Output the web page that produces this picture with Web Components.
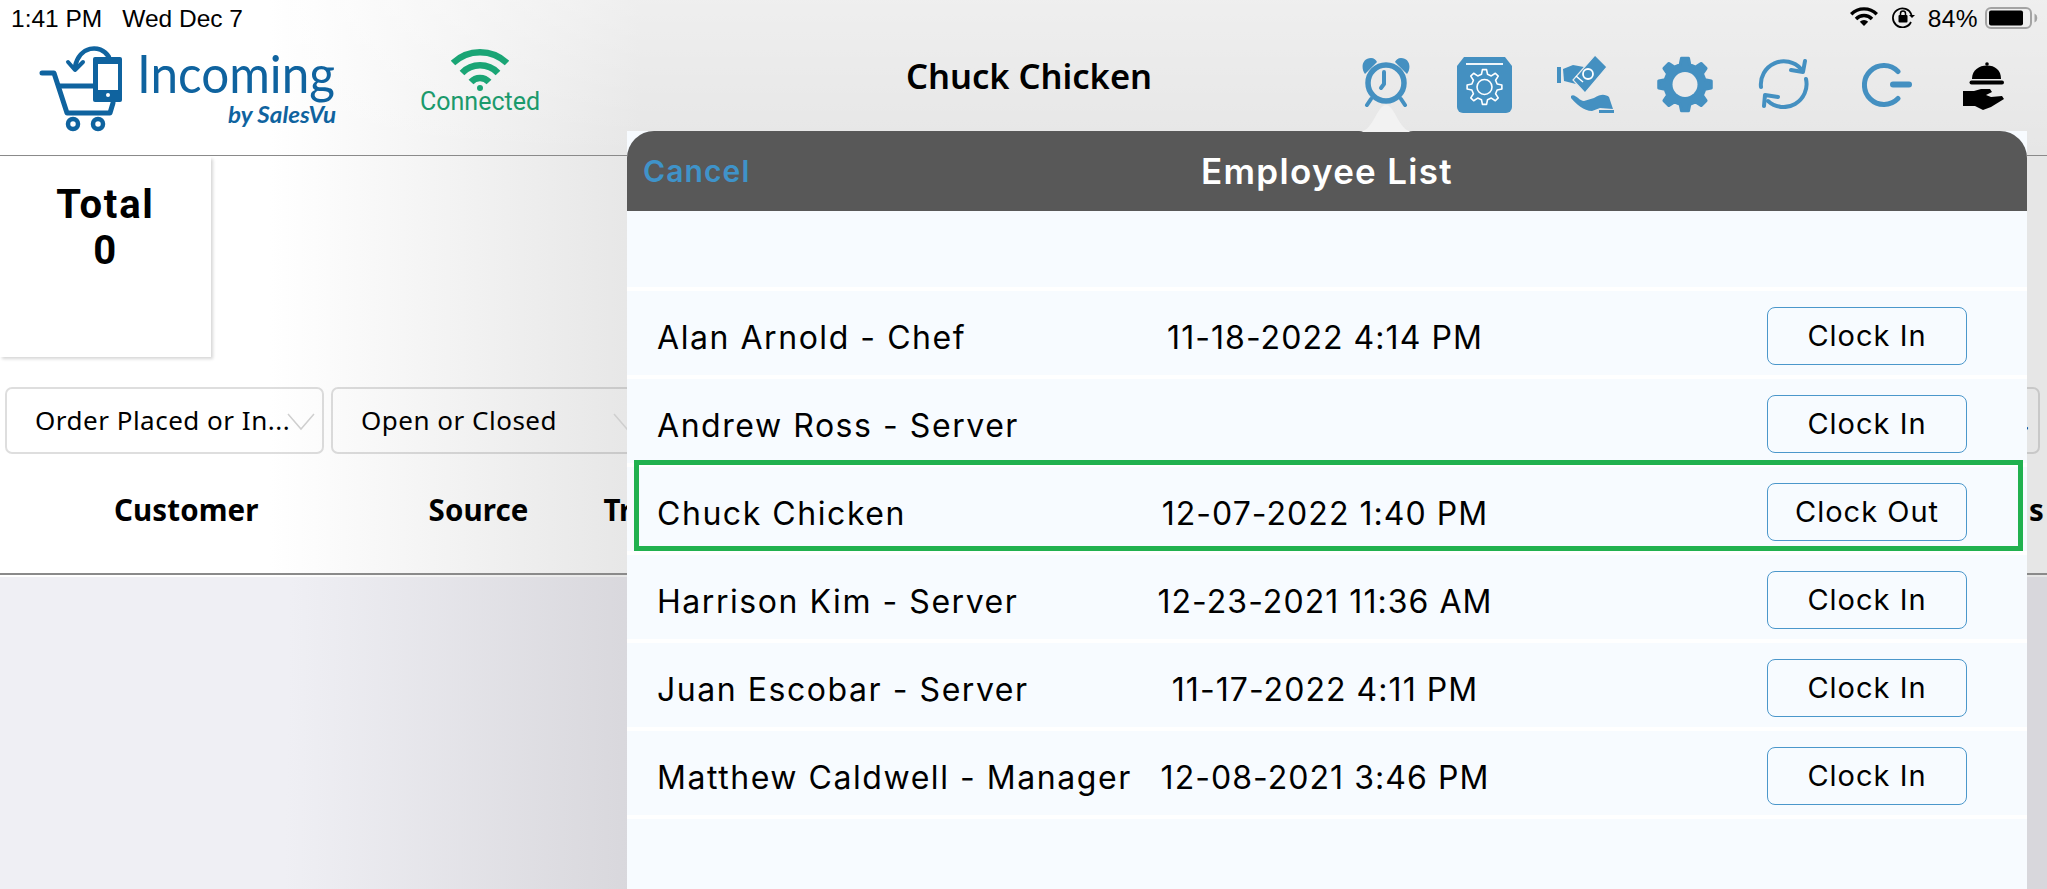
<!DOCTYPE html>
<html lang="en"><head><meta charset="utf-8"><title>Incoming</title>
<style>html,body{margin:0;height:100%;overflow:hidden}body{font-family:"Noto Sans",sans-serif}</style>
</head><body>
<pos-app></pos-app>
<script>
function gearPath(cx,cy,R,r,n,a0,b0){let d='';const s=2*Math.PI/n;for(let i=0;i<n;i++){const a=-Math.PI/2+i*s;
 [[r,-a0],[R,-b0],[R,b0],[r,a0]].forEach(([q,o],j)=>{const t=a+o*s;d+=(i===0&&j===0?'M':'L')+(cx+q*Math.cos(t)).toFixed(2)+' '+(cy+q*Math.sin(t)).toFixed(2)});}
 return d+'Z';}
function def(name,html,setup){customElements.define(name,class extends HTMLElement{connectedCallback(){if(this.shadowRoot)return;const r=this.attachShadow({mode:'open'});r.innerHTML=typeof html==='function'?html(this):html;if(setup)setup(r,this);}});}
const BLUE='#4490c1';
def('status-bar',`<style>
:host{display:flex;height:37px;align-items:flex-start;font:24.5px "Liberation Sans",sans-serif;color:#000;position:relative}
.t{margin-top:5px;line-height:27px}
svg{display:block;flex:none}
</style>
<span class="t" style="margin-left:11px">1:41 PM</span><span class="t" style="margin-left:20px">Wed Dec 7</span>
<svg style="margin:7px 0 0 auto" width="28" height="19" viewBox="0 0 28 19" fill="none" stroke="#000" stroke-width="3.4"><path d="M1.2 7.2A18 18 0 0 1 26.8 7.2"/><path d="M6 12A11 11 0 0 1 22 12"/><path d="M14 19L9.8 14.8A6 6 0 0 1 18.2 14.8Z" fill="#000" stroke="none"/></svg>
<svg style="margin:6px 0 0 14px" width="24" height="22" viewBox="0 0 24 22" fill="none" stroke="#000" stroke-width="1.8"><path d="M19 16A9.5 9.5 0 1 1 19.5 9"/><path d="M17 9L20 12L23 9" fill="#000" stroke="none"/><rect x="6.5" y="9" width="9" height="7.5" rx="1" fill="#000" stroke="none"/><path d="M8.5 9V7.5A2.5 2.5 0 0 1 13.5 7.5V9" stroke-width="1.5"/></svg>
<span class="t" style="margin-left:12px;letter-spacing:.4px">84%</span>
<svg style="margin:7px 9px 0 7px" width="53" height="22" viewBox="0 0 53 22"><rect x="1" y="1" width="45" height="20" rx="5" fill="none" stroke="#a3a3a3" stroke-width="2"/><rect x="4" y="3.500" width="34" height="15" rx="2" fill="#000"/><path d="M49.500 6.500a5 5 0 0 1 0 9z" fill="#a3a3a3"/></svg>`);
def('brand-logo',`<style>:host{display:block;width:320px;height:100px;flex:none}svg{display:block}</style>
<svg width="320" height="100" viewBox="0 0 320 100" fill="none" stroke="#0f639f" stroke-linecap="round" stroke-linejoin="round">
<path d="M12 33H24L37 73H80L83 63" stroke-width="5"/><path d="M29 46H64" stroke-width="5"/>
<circle cx="43" cy="84" r="5" stroke-width="4.500"/><circle cx="68" cy="84" r="5" stroke-width="4.500"/>
<path d="M79 17C70 3 49 6 45 27" stroke-width="4.500"/><path d="M38 22L45 30L53 22" stroke-width="4"/>
<rect x="63" y="17" width="29" height="45" rx="2" fill="#0f639f" stroke="none"/><rect x="68" y="24" width="20" height="26" fill="#fff" stroke="none"/><circle cx="78" cy="55" r="2" fill="#fff" stroke="none"/>
<text x="107" y="53" font-family="Lato,sans-serif" font-weight="400" font-size="52" fill="#0f639f" stroke="none" textLength="198" lengthAdjust="spacingAndGlyphs">Incoming</text>
<text x="198" y="83" font-family="Lato,sans-serif" font-weight="700" font-style="italic" font-size="23" fill="#0f639f" stroke="none" textLength="108" lengthAdjust="spacingAndGlyphs">by SalesVu</text>
</svg>`);
def('link-status',`<style>:host{display:flex;flex-direction:column;align-items:center;width:120px;flex:none;color:#1b9a6c;font:25px/28px Roboto,sans-serif}svg{display:block;margin-bottom:-3px}</style>
<svg width="58" height="43" viewBox="0 0 58 43" fill="none" stroke="#1aa575" stroke-width="6.500"><path d="M2 15A39 39 0 0 1 56 15"/><path d="M11 25A25 25 0 0 1 47 25"/><path d="M20 34A12 12 0 0 1 38 34"/><circle cx="29" cy="40" r="3" fill="#1aa575" stroke="none"/></svg>
<span>Connected</span>`);
def('clock-icon',`<style>:host{display:block}svg{display:block}</style><svg width="48" height="49" viewBox="0 0 48 49" fill="none" stroke="${BLUE}"><circle cx="24" cy="25" r="18" stroke-width="5.500"/><path d="M3 16C-2 9 1 0 9 0C12 0 14 2 15 4ZM45 16C50 9 47 0 39 0C36 0 34 2 33 4Z" fill="${BLUE}" stroke="none"/><path d="M9 41L5 47M39 41L43 47" stroke-width="4" stroke-linecap="round"/><path d="M22 14V26L19 30" stroke-width="4" stroke-linecap="round" stroke-linejoin="round"/></svg>`);
def('config-icon',`<style>:host{display:block}svg{display:block}</style><svg width="55" height="56" viewBox="0 0 55 56"><path d="M7 0H48L55 9V50A6 6 0 0 1 49 56H6A6 6 0 0 1 0 50V9Z" fill="${BLUE}"/><path d="M9 7H46" stroke="#f0f6fa" stroke-width="2"/><path d="${gearPath(27.5,30,17.500,13,8,.3,.15)}" fill="none" stroke="#fff" stroke-width="1.600" stroke-linejoin="round"/><circle cx="27.500" cy="30" r="7.500" fill="none" stroke="#fff" stroke-width="1.600"/></svg>`);
def('cash-icon',`<style>:host{display:block}svg{display:block}</style><svg width="58" height="58" viewBox="0 0 58 58"><path d="M1 12H5V28H1Z" fill="${BLUE}"/><path d="M7 14L17 10L28 12L30 30H24L8 26Z" fill="${BLUE}"/><path d="M39 0L51 12L29 38L17 25Z" fill="${BLUE}" stroke="#eaeaea" stroke-width="1.200"/><circle cx="32" cy="19" r="5" fill="none" stroke="#fff" stroke-width="1.800"/><path d="M20 21L27 27" stroke="#fff" stroke-width="1.500"/><path d="M15 41C19 38 23 46 28 46L38 43C46 38 50 40 53 42L57 54L44 53L36 56C28 56 20 49 15 43Z" fill="${BLUE}"/><path d="M43 55H58V58H43Z" fill="${BLUE}"/></svg>`);
def('gear-icon',`<style>:host{display:block}svg{display:block}</style><svg width="58" height="57" viewBox="0 0 58 57"><path d="${gearPath(29,28.5,26.500,20.500,8,.3,.17)} M29 15.500A13 13 0 1 0 29 41.500A13 13 0 1 0 29 15.500Z" fill="${BLUE}" stroke="${BLUE}" stroke-width="3" stroke-linejoin="round" fill-rule="evenodd"/><circle cx="29" cy="28.500" r="12.500" fill="#ebebeb"/></svg>`);
def('sync-icon',`<style>:host{display:block}svg{display:block}</style><svg width="52" height="50" viewBox="0 0 52 50" fill="none" stroke="${BLUE}" stroke-width="4" stroke-linecap="round" stroke-linejoin="round"><path d="M3 28A23 23 0 0 1 43 10"/><path d="M47 2L45 13L33 11"/><path d="M48 20A23 23 0 0 1 10 42"/><path d="M6 47L7 36L20 38"/></svg>`);
def('power-icon',`<style>:host{display:block}svg{display:block}</style><svg width="51" height="44" viewBox="0 0 51 44" fill="none" stroke="${BLUE}" stroke-linecap="round"><path d="M36 8.500A19.500 19.500 0 1 0 36 35.500" stroke-width="5"/><path d="M31 21.500H47" stroke-width="6"/></svg>`);
def('service-icon',`<style>:host{display:block}svg{display:block}</style><svg width="41" height="48" viewBox="0 0 41 48" fill="#000"><circle cx="24" cy="2" r="1.800"/><path d="M9 17C9 8 16 3.500 24 3.500S38 8 38 17Z"/><rect x="6.500" y="18.500" width="34.500" height="4" rx="2"/><path d="M0 29H11L18 27H27L29 30L23 33L28 35L39 34L41 37L28 45L20 48L12 44H0Z"/></svg>`);
def('app-header',`<style>
:host{display:flex;height:118px;border-bottom:1px solid #8a8a8a;align-items:flex-start;box-sizing:content-box}
brand-logo{margin:3px 0 0 30px}
link-status{margin:11px 0 0 70px}
.title{flex:none;width:248px;margin:19px 0 0 365px;font:600 34.5px/40px "Noto Sans",sans-serif;color:#000;white-space:nowrap;display:flex;justify-content:center}
</style>
<brand-logo></brand-logo><link-status></link-status><div class="title">Chuck Chicken</div>
<clock-icon style="margin:21px 0 0 209px"></clock-icon>
<config-icon style="margin:20px 0 0 47px"></config-icon>
<cash-icon style="margin:18px 0 0 44px"></cash-icon>
<gear-icon style="margin:19px 0 0 42px"></gear-icon>
<sync-icon style="margin:22px 0 0 44px"></sync-icon>
<power-icon style="margin:26px 0 0 52px"></power-icon>
<service-icon style="margin:25px 0 0 50px"></service-icon>`);
def('stat-card',t=>`<style>:host{display:block;box-sizing:border-box;width:211px;height:200px;margin-top:1px;background:#fff;box-shadow:2px 2px 3px rgba(0,0,0,.16);padding-top:25px;text-align:center;font:700 40px/46px Roboto,sans-serif;letter-spacing:1.8px;color:#000}div{margin:0}</style><div>${t.getAttribute('label')}</div><div>${t.getAttribute('value')}</div>`);
def('filter-select',`<style>:host{display:block;box-sizing:border-box;position:relative;width:319px;height:67px;flex:none;border:2px solid rgba(0,0,0,.13);border-radius:7px;font:26px/62px "Noto Sans",sans-serif;letter-spacing:.5px;color:#000;padding-left:28px;white-space:nowrap}
svg{position:absolute;left:280px;top:24px}:host([end]){flex:1 1 auto;padding-right:8px;text-align:right}:host([end]) svg{display:none}</style><slot></slot><svg width="28" height="18" viewBox="0 0 28 18" fill="none" stroke="#cfcfcf" stroke-width="1.500"><path d="M1 1L14 16L27 1"/></svg>`);
def('filter-bar',`<style>:host{display:flex;gap:7px;margin-top:30px;padding:0 7px 0 5px}</style><slot></slot>`);
def('table-head',`<style>:host{display:flex;box-sizing:border-box;height:121px;border-bottom:2px solid #8a8a8a;padding-bottom:8px;align-items:center;font:700 29.5px "Noto Sans",sans-serif;letter-spacing:.1px;color:#000}span{white-space:nowrap}</style>
<span style="margin-left:114px">Customer</span><span style="margin-left:170px">Source</span><span style="margin-left:75px">Tr</span><span style="margin-left:auto;margin-right:3px">s</span>`);
def('clock-button',`<style>:host{display:flex;box-sizing:border-box;width:200px;height:58px;border:1.500px solid #4b97cb;border-radius:8px;align-items:center;justify-content:center;padding-bottom:2px;font:400 29px Inter,sans-serif;letter-spacing:1px;color:#000}</style><slot></slot>`);
def('employee-row',t=>`<style>:host{display:grid;position:relative;box-sizing:border-box;height:88px;border-bottom:4px solid #fff;padding:6px 60px 0 30px;grid-template-columns:480px 376px 1fr 200px;align-items:center;font:400 32px Inter,sans-serif;letter-spacing:1.35px;color:#000}
.d{text-align:center;white-space:nowrap;margin-top:2px;letter-spacing:1.05px}.n{white-space:nowrap;margin-top:2px;letter-spacing:1.55px}clock-button{grid-column:4}
.hl{position:absolute;left:7px;right:4px;top:-7px;box-sizing:border-box;height:91px;border:5px solid #21b14f;pointer-events:none}</style>
<div class="n">${t.getAttribute('name')}</div><div class="d">${t.getAttribute('time')||''}</div><clock-button>${t.getAttribute('action')||'Clock In'}</clock-button>${t.hasAttribute('current')?'<div class="hl"></div>':''}`);
def('employee-popover',`<style>:host{display:flex;flex-direction:column;position:absolute;left:627px;top:131px;width:1400px;bottom:0;background:#f7fbff}
.arrow{position:absolute;left:732px;top:-26px;display:block}
header{display:grid;grid-template-columns:1fr auto 1fr;align-items:center;height:80px;background:#585858;border-radius:27px 27px 0 0;font:600 35px Inter,sans-serif;letter-spacing:1.3px;color:#fff;padding:0 16px}
.c{color:#3f93c9;font-size:30px;letter-spacing:1.1px}.blank{height:80px;border-bottom:4px solid #fff;box-sizing:border-box}</style>
<svg class="arrow" width="54" height="27" viewBox="0 0 54 27"><path d="M0 27C14 27 18 0 27 0C36 0 40 27 54 27Z" fill="#f2f2f2"/></svg>
<header><span class="c">Cancel</span><span>Employee List</span><span></span></header><div class="blank"></div><slot></slot>`);
def('pos-app',`<style>:host{display:flex;flex-direction:column;position:relative;height:889px;width:2047px;overflow:hidden;background:linear-gradient(180deg,rgba(255,255,255,.35),rgba(255,255,255,0) 155px),linear-gradient(90deg,#fff 270px,#e6e6e6 640px)}
.lower{flex:1;margin-top:2px;background:linear-gradient(91deg,#efeff4 290px,#d8d7dc 640px)}</style>
<status-bar></status-bar><app-header></app-header>
<stat-card label="Total" value="0"></stat-card>
<filter-bar><filter-select>Order Placed or In...</filter-select><filter-select>Open or Closed</filter-select><filter-select></filter-select><filter-select></filter-select><filter-select></filter-select><filter-select end>…</filter-select></filter-bar>
<table-head></table-head><div class="lower"></div>
<employee-popover>
<employee-row name="Alan Arnold - Chef" time="11-18-2022 4:14 PM"></employee-row>
<employee-row name="Andrew Ross - Server"></employee-row>
<employee-row name="Chuck Chicken" time="12-07-2022 1:40 PM" action="Clock Out" current></employee-row>
<employee-row name="Harrison Kim - Server" time="12-23-2021 11:36 AM"></employee-row>
<employee-row name="Juan Escobar - Server" time="11-17-2022 4:11 PM"></employee-row>
<employee-row name="Matthew Caldwell - Manager" time="12-08-2021 3:46 PM"></employee-row>
</employee-popover>`);
</script>
</body></html>
